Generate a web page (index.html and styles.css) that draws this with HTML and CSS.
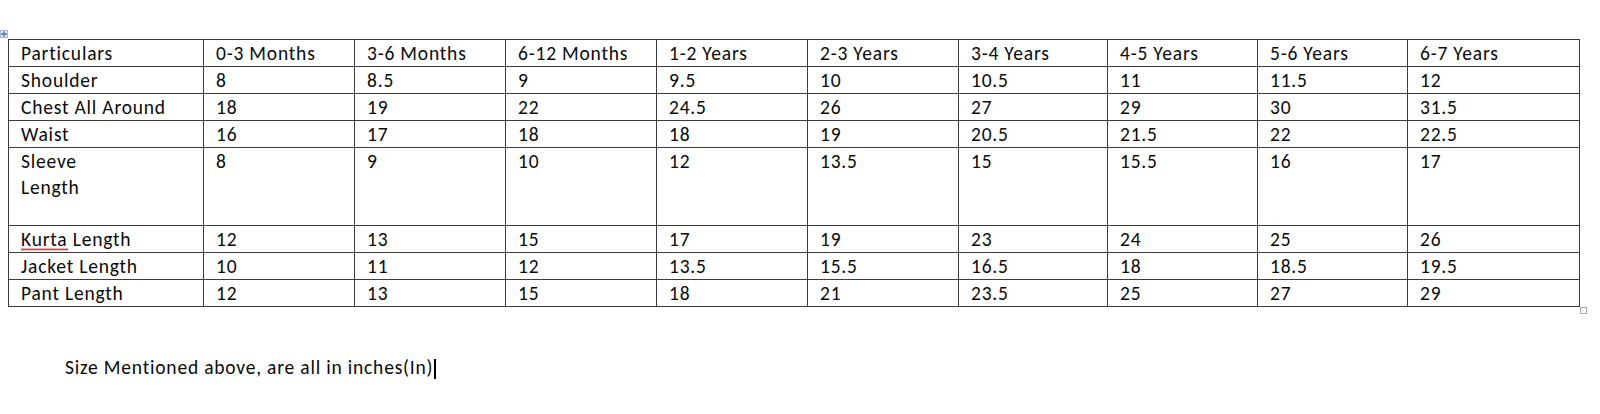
FILE: index.html
```html
<!DOCTYPE html>
<html>
<head>
<meta charset="utf-8">
<link rel="stylesheet" href="styles.css">
</head>
<body>
<div class="page">
  <div class="table-wrap">
    <svg class="move-handle" width="8" height="8" viewBox="0 0 8 8">
      <rect x="0.5" y="0.5" width="7" height="7" fill="#eef3fb" stroke="#9fb4d6" stroke-width="1"/>
      <path d="M4 1.5 V6.5 M1.5 4 H6.5" stroke="#3b5c99" stroke-width="1"/>
      <path d="M3 2.5 L4 1.5 L5 2.5 M3 5.5 L4 6.5 L5 5.5 M2.5 3 L1.5 4 L2.5 5 M5.5 3 L6.5 4 L5.5 5" stroke="#3b5c99" stroke-width="0.8" fill="none"/>
    </svg>
    <table class="sizes">
      <colgroup>
        <col class="c-first">
        <col class="c-151"><col class="c-151"><col class="c-151"><col class="c-151"><col class="c-151">
        <col class="c-149"><col class="c-150"><col class="c-150"><col class="c-last">
      </colgroup>
      <tr><td>Particulars</td><td>0-3 Months</td><td>3-6 Months</td><td>6-12 Months</td><td>1-2 Years</td><td>2-3 Years</td><td>3-4 Years</td><td>4-5 Years</td><td>5-6 Years</td><td>6-7 Years</td></tr>
      <tr><td>Shoulder</td><td>8</td><td>8.5</td><td>9</td><td>9.5</td><td>10</td><td>10.5</td><td>11</td><td>11.5</td><td>12</td></tr>
      <tr><td>Chest All Around</td><td>18</td><td>19</td><td>22</td><td>24.5</td><td>26</td><td>27</td><td>29</td><td>30</td><td>31.5</td></tr>
      <tr><td>Waist</td><td>16</td><td>17</td><td>18</td><td>18</td><td>19</td><td>20.5</td><td>21.5</td><td>22</td><td>22.5</td></tr>
      <tr class="tall"><td>Sleeve<br>Length</td><td>8</td><td>9</td><td>10</td><td>12</td><td>13.5</td><td>15</td><td>15.5</td><td>16</td><td>17</td></tr>
      <tr><td><span class="spell">Kurta</span> Length</td><td>12</td><td>13</td><td>15</td><td>17</td><td>19</td><td>23</td><td>24</td><td>25</td><td>26</td></tr>
      <tr><td>Jacket Length</td><td>10</td><td>11</td><td>12</td><td>13.5</td><td>15.5</td><td>16.5</td><td>18</td><td>18.5</td><td>19.5</td></tr>
      <tr><td>Pant Length</td><td>12</td><td>13</td><td>15</td><td>18</td><td>21</td><td>23.5</td><td>25</td><td>27</td><td>29</td></tr>
    </table>
    <span class="resize-handle"></span>
  </div>
  <p class="note">Size Mentioned above, are all in inches(In)<span class="caret"></span></p>
</div>
</body>
</html>
```
FILE: styles.css
```css
html, body {
  margin: 0;
  padding: 0;
  background: #ffffff;
}
.page {
  width: 1600px;
  height: 414px;
  overflow: hidden;
  font-family: Carlito, Calibri, Lato, "Liberation Sans", sans-serif;
  color: #0a0a0a;
  font-size: 19.5px;
  letter-spacing: 0.8px;
}
.table-wrap {
  position: relative;
  padding-top: 39px;
  padding-left: 8px;
}
.move-handle {
  position: absolute;
  left: 0;
  top: 30px;
}
.resize-handle {
  position: absolute;
  left: 1580px;
  top: 307px;
  width: 5px;
  height: 5px;
  border: 1px solid #a9a9a9;
  background: #fff;
}
.sizes {
  border-collapse: collapse;
  table-layout: fixed;
  width: 1572px;
}
.c-first { width: 195px; }
.c-151 { width: 151px; }
.c-150 { width: 150px; }
.c-149 { width: 149px; }
.c-last { width: 172px; }
.sizes td {
  border: 1px solid #3c3c3c;
  padding: 0 12px;
  height: 25.6px;
  line-height: 26px;
  vertical-align: top;
  white-space: nowrap;
  overflow: hidden;
}
.sizes tr.tall td {
  height: 77px;
}
.spell {
  display: inline-block;
  line-height: 22px;
  padding-bottom: 1px;
  background-image: url("data:image/svg+xml,%3Csvg xmlns='http://www.w3.org/2000/svg' width='4' height='3' viewBox='0 0 4 3'%3E%3Cpath d='M0 2.5 L1 0.5 L2 2.5 L3 0.5 L4 2.5' fill='none' stroke='%23e02a2a' stroke-width='0.9'/%3E%3C/svg%3E");
  background-repeat: repeat-x;
  background-position: left bottom;
  background-size: 4px 3px;
}
.note {
  margin: 0;
  padding-top: 47px;
  padding-left: 65px;
  line-height: 26px;
}
.caret {
  display: inline-block;
  width: 1.5px;
  height: 20px;
  background: #000;
  vertical-align: -5px;
  margin-left: 1px;
}
```
